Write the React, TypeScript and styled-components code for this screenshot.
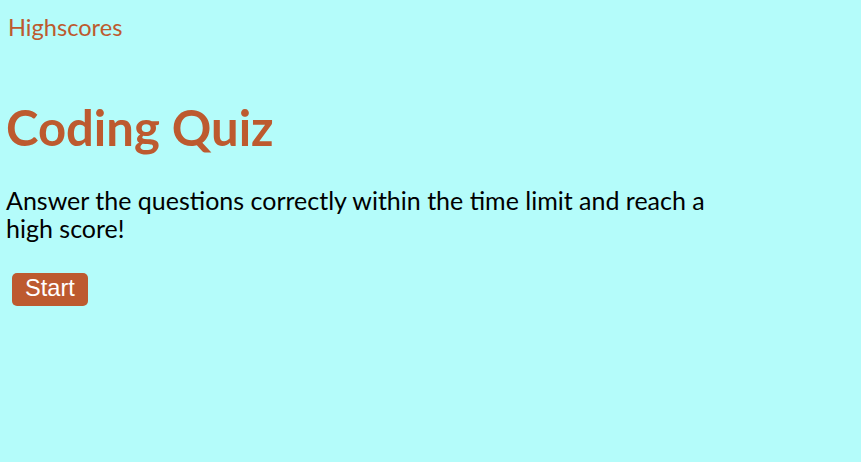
import styled, { createGlobalStyle } from "styled-components";

const GlobalStyle = createGlobalStyle`
  html, body {
    margin: 0;
    padding: 0;
    background-color: #b4fcfa;
  }
  body {
    font-family: Lato, "Noto Sans", sans-serif;
    min-height: 100vh;
  }
`;

const Page = styled.div`
  padding: 8px 6px;
`;

const Header = styled.header`
  display: flex;
  align-items: center;
  height: 38px;
`;

const HighscoresLink = styled.a`
  font-size: 23.6px;
  color: #bd5a2f;
  text-decoration: none;
  padding-left: 2px;
  cursor: pointer;
`;

const Main = styled.main`
  max-width: 720px;
`;

const Title = styled.h1`
  margin: 51px 0 0;
  font-size: 49px;
  line-height: 60px;
  font-weight: 700;
  color: #bd5a2f;
`;

const Intro = styled.p`
  margin: 29px 0 0;
  font-size: 25px;
  line-height: 28px;
  color: #000;
`;

const StartButton = styled.button`
  margin: 31px 0 0 6px;
  padding: 2px 13px 4px;
  font-family: "Liberation Sans", Arial, sans-serif;
  font-size: 23.6px;
  color: #fff;
  background-color: #bd5a2f;
  border: none;
  border-radius: 5px;
  cursor: pointer;
`;

const App = () => {
  return (
    <>
      <GlobalStyle />
      <Page>
        <Header>
          <HighscoresLink>Highscores</HighscoresLink>
        </Header>
        <Main>
          <Title>Coding Quiz</Title>
          <Intro>
            Answer the questions correctly within the time limit and reach a
            high score!
          </Intro>
          <StartButton>Start</StartButton>
        </Main>
      </Page>
    </>
  );
};

export default App;
